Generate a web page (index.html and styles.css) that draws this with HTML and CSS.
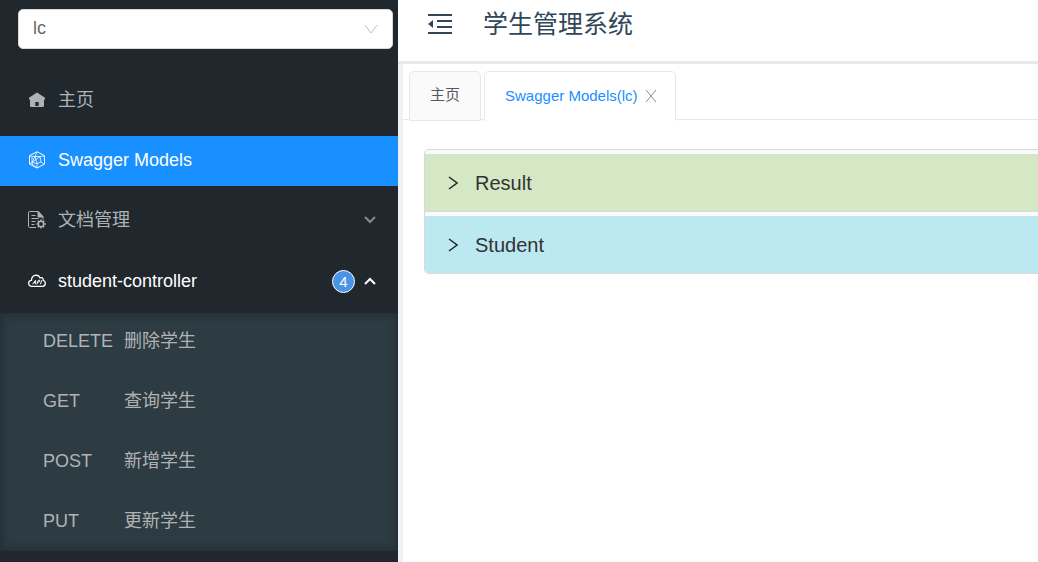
FILE: index.html
```html
<!DOCTYPE html>
<html lang="zh-CN">
<head>
    <meta charset="UTF-8">
    <meta name="viewport" content="width=device-width, initial-scale=1.0">
    <title>学生管理系统</title>
    <link rel="stylesheet" href="styles.css">
</head>
<body>
    <div class="layout">
        <aside class="sider">
            <div class="group-select">
                <select aria-label="分组">
                    <option>lc</option>
                </select>
                <svg class="select-arrow" viewBox="0 0 14 10" aria-hidden="true"><path d="M1 1l6 8 6-8"/></svg>
            </div>
            <nav>
                <ul class="menu">
                    <li>
                        <a class="menu-item" href="#home">
                            <svg class="menu-icon" viewBox="0 0 18 18" aria-hidden="true">
                                <path fill="currentColor" fill-rule="evenodd" d="M9 1.500L1.300 6.500q-.5.500-.3 1.500l1 1v5.500q0 1.500 1.500 1.500h11q1.500 0 1.500-1.500V9l1-1q.2-1-.3-1.500zM7.300 11h3.400v4H7.300z"/>
                            </svg>
                            <span>主页</span>
                        </a>
                    </li>
                    <li>
                        <a class="menu-item active" href="#models">
                            <svg class="menu-icon line" viewBox="0 0 18 18" aria-hidden="true">
                                <path d="M9 .7l7.500 4v8.400L9 17l-7.500-3.900V4.700z"/>
                                <path stroke-width=".8" d="M9 1L7 5.500 2 5M7 5.500l-3 6 5 1 4-1.500-1-5.500-5 0M12 5.500l4-.5M12 5.500L4 11.500M7 5.500L9 12.500M4 11.500l-2 1.500M9 12.500V17M13 11l3 2M4 6v7l4 3"/>
                            </svg>
                            <span>Swagger Models</span>
                        </a>
                    </li>
                    <li>
                        <a class="menu-item" href="#docs">
                            <svg class="menu-icon line" viewBox="0 0 18 18" aria-hidden="true">
                                <path d="M8 16.500H1.500q-1 0-1-1v-14q0-1 1-1h9l4.500 5v3"/>
                                <path fill="currentColor" d="M10 1v5h5z"/>
                                <path d="M3.500 4.500h4M3.500 7.500h7M3.500 10.500h4M3.500 13.500h3"/>
                                <circle cx="13" cy="13" r="2.700" stroke-width="1.500"/>
                                <path stroke-width="1.500" d="M13 8.500v2M13 15.500v2M8.500 13h2M15.500 13h2.300M9.800 9.800l1.500 1.500M14.700 14.700l1.500 1.500M9.800 16.200l1.500-1.500M14.700 11.300l1.500-1.500"/>
                            </svg>
                            <span>文档管理</span>
                            <svg class="menu-arrow" viewBox="0 0 12 8" aria-hidden="true"><path d="M1 1l5 5 5-5"/></svg>
                        </a>
                    </li>
                    <li>
                        <a class="menu-item open" href="#student">
                            <svg class="menu-icon line" viewBox="0 0 18 18" aria-hidden="true">
                                <path stroke-width="1.300" d="M4 14.300C-.5 14.300-.2 8.300 3.500 8.300 3.500 3.300 10 1.300 12 5.800c2-.8 3.500.6 3.200 2.500 3 1 2.800 6-.7 6z"/>
                                <path d="M4.500 12.300l3-4 .3 4M5.800 10.800h2M9 12.300l1.200-4h1.500q1 1.500-1.800 2M12.500 12.300l1.200-4"/>
                            </svg>
                            <span>student-controller</span>
                            <span class="badge">4</span>
                            <svg class="menu-arrow" viewBox="0 0 12 8" aria-hidden="true"><path d="M1 7l5-5 5 5"/></svg>
                        </a>
                        <ul class="submenu">
                            <li><a href="#delete"><span class="method">DELETE</span>删除学生</a></li>
                            <li><a href="#get"><span class="method">GET</span>查询学生</a></li>
                            <li><a href="#post"><span class="method">POST</span>新增学生</a></li>
                            <li><a href="#put"><span class="method">PUT</span>更新学生</a></li>
                        </ul>
                    </li>
                </ul>
            </nav>
        </aside>

        <div class="main">
            <header class="header">
                <button class="trigger" type="button" aria-label="收起菜单">
                    <svg viewBox="0 0 24 22" aria-hidden="true">
                        <path fill="currentColor" d="M0 1h24v2H0zM9 7h15v2H9zM9 13h15v2H9zM0 19h24v2H0zM0 11l5-4v8z"/>
                    </svg>
                </button>
                <h1>学生管理系统</h1>
            </header>

            <main class="content">
                <div class="tabs">
                    <div class="tab"><button type="button">主页</button></div>
                    <div class="tab current">
                        <button type="button">Swagger Models(lc)</button>
                        <button class="close" type="button" aria-label="关闭">
                            <svg viewBox="0 0 12 12" aria-hidden="true"><path d="M1 0l10 12M11 0L1 12"/></svg>
                        </button>
                    </div>
                </div>

                <div class="collapse">
                    <div class="panel">
                        <button class="panel-header result" type="button" aria-expanded="false">
                            <svg viewBox="0 0 10 14" aria-hidden="true"><path d="M1 1l8 6-8 6"/></svg>
                            Result
                        </button>
                    </div>
                    <div class="panel">
                        <button class="panel-header student" type="button" aria-expanded="false">
                            <svg viewBox="0 0 10 14" aria-hidden="true"><path d="M1 1l8 6-8 6"/></svg>
                            Student
                        </button>
                    </div>
                </div>
            </main>
        </div>
    </div>
</body>
</html>
```
FILE: styles.css
```css
* {
    box-sizing: border-box;
}
body {
    margin: 0;
    font-family: "Liberation Sans", "Noto Sans CJK SC", sans-serif;
    line-height: 24px;
    background-color: #fff;
}
button {
    padding: 0;
    border: none;
    background: none;
    color: inherit;
    font: inherit;
    cursor: pointer;
}
a {
    color: inherit;
    text-decoration: none;
}
ul {
    margin: 0;
    padding: 0;
    list-style: none;
}
svg {
    display: block;
    flex: none;
    fill: none;
}
.layout {
    display: flex;
    min-height: 100vh;
}

/* sidebar */
.sider {
    flex: none;
    width: 398px;
    padding-top: 9px;
    background-color: #20272d;
    color: #b0b3b5;
    font-size: 18px;
}
.group-select {
    position: relative;
    margin: 0 5px 27px 18px;
}
.group-select select {
    display: block;
    width: 100%;
    height: 40px;
    padding: 0 14px 2px;
    appearance: none;
    border: 1px solid #d9d9d9;
    border-radius: 5px;
    background-color: #fff;
    color: #666;
    font: inherit;
}
.select-arrow {
    position: absolute;
    top: 15px;
    right: 15px;
    width: 14px;
    height: 10px;
    stroke: #bfbfbf;
    pointer-events: none;
}
.menu-item {
    display: flex;
    align-items: center;
    height: 50px;
    margin-bottom: 10px;
    padding: 0 22px 2px 28px;
}
.menu-item.active {
    background-color: #1890ff;
    color: #fff;
}
.menu-item.open {
    margin-bottom: 7px;
    padding-bottom: 0;
    color: #fff;
}
.menu-icon {
    width: 18px;
    height: 18px;
    margin-right: 12px;
}
.line {
    stroke: currentColor;
}
.menu-arrow {
    width: 12px;
    height: 8px;
    margin-left: auto;
    stroke: currentColor;
    stroke-width: 2;
    opacity: 0.7;
}
.open .menu-arrow {
    margin-left: 9px;
    opacity: 1;
}
.badge {
    width: 23px;
    height: 23px;
    margin-left: auto;
    border: 1px solid #fff;
    border-radius: 50%;
    background-color: #4a94e8;
    font-size: 15px;
    line-height: 21px;
    text-align: center;
}
.submenu {
    background-color: #2d3b42;
    box-shadow: inset 0 0 10px #20272d;
}
.submenu a {
    display: flex;
    align-items: center;
    height: 60px;
    padding: 0 22px 4px 43px;
}
.submenu li:last-child a {
    height: 58px;
    padding-bottom: 2px;
}
.method {
    width: 81px;
}

/* page */
.main {
    flex: 1;
    min-width: 0;
    display: flex;
    flex-direction: column;
}
.header {
    display: flex;
    align-items: center;
    height: 64px;
    padding: 0 30px 14px;
    border-bottom: 3px solid #e6e9ed;
    color: #314659;
}
.trigger svg {
    width: 24px;
    height: 22px;
}
.header h1 {
    margin: 0 0 0 31px;
    font-size: 25px;
    font-weight: 400;
}
.content {
    flex: 1;
    padding-top: 7px;
    border-left: 5px solid #f0f2f5;
}
.tabs {
    display: flex;
    gap: 3px;
    height: 49px;
    padding-left: 6px;
    border-bottom: 1px solid #e8e8e8;
    font-size: 15px;
}
.tab {
    display: flex;
    align-items: center;
    height: 50px;
    padding: 0 20px 2px;
    border: 1px solid #e8e8e8;
    border-radius: 5px 5px 0 0;
    background-color: #fafafa;
    color: #595959;
}
.tab.current {
    padding-right: 18px;
    border-bottom: none;
    background-color: #fff;
    color: #1890ff;
}
.tab .close {
    margin-left: 7px;
}
.close svg {
    width: 12px;
    height: 12px;
    stroke: #8c8c8c;
}
.collapse {
    margin: 29px 0 0 21px;
    overflow: hidden;
    border: 1px solid #d9d9d9;
    border-right: none;
    border-radius: 5px 0 0 5px;
    background-color: #fafafa;
}
.panel {
    padding-top: 4px;
}
.panel + .panel {
    border-top: 1px solid #d9d9d9;
}
.panel-header {
    display: flex;
    align-items: center;
    gap: 17px;
    width: 100%;
    height: 57px;
    padding-left: 23px;
    color: #333;
    font-size: 20px;
}
.panel-header svg {
    width: 10px;
    height: 14px;
    stroke: #262626;
    stroke-width: 1.5;
}
.result {
    background-color: #d5e8c6;
}
.student {
    background-color: #bce8f1;
}
```
